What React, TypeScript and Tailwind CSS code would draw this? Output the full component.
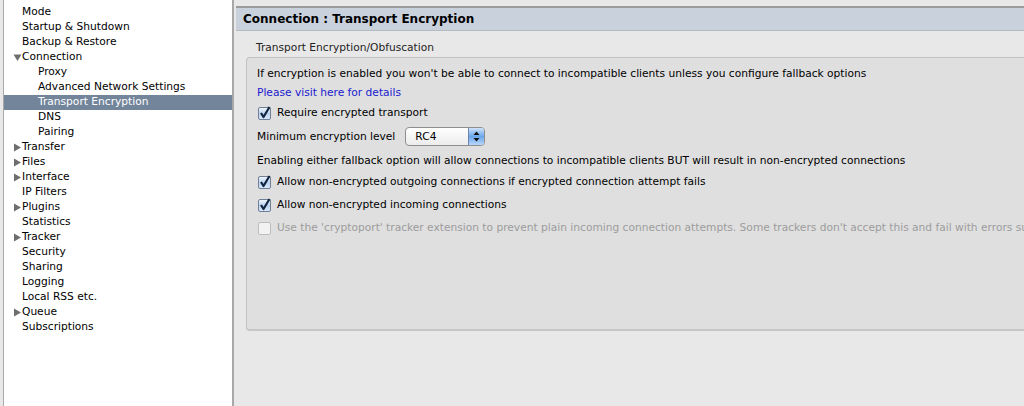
import type { ReactNode } from 'react'

const font = { fontFamily: '"DejaVu Sans", "Liberation Sans", sans-serif' }

type Node = { label: string; level: 0 | 1; arrow?: 'open' | 'closed'; selected?: boolean }

const tree: Node[] = [
  { label: 'Mode', level: 0 },
  { label: 'Startup & Shutdown', level: 0 },
  { label: 'Backup & Restore', level: 0 },
  { label: 'Connection', level: 0, arrow: 'open' },
  { label: 'Proxy', level: 1 },
  { label: 'Advanced Network Settings', level: 1 },
  { label: 'Transport Encryption', level: 1, selected: true },
  { label: 'DNS', level: 1 },
  { label: 'Pairing', level: 1 },
  { label: 'Transfer', level: 0, arrow: 'closed' },
  { label: 'Files', level: 0, arrow: 'closed' },
  { label: 'Interface', level: 0, arrow: 'closed' },
  { label: 'IP Filters', level: 0 },
  { label: 'Plugins', level: 0, arrow: 'closed' },
  { label: 'Statistics', level: 0 },
  { label: 'Tracker', level: 0, arrow: 'closed' },
  { label: 'Security', level: 0 },
  { label: 'Sharing', level: 0 },
  { label: 'Logging', level: 0 },
  { label: 'Local RSS etc.', level: 0 },
  { label: 'Queue', level: 0, arrow: 'closed' },
  { label: 'Subscriptions', level: 0 },
]

const Arrow = ({ open }: { open: boolean }) => (
  <svg width="9" height="9" viewBox="0 0 9 9" className="shrink-0">
    {open ? <path d="M0.5 1.5 L8.5 1.5 L4.5 8 Z" fill="#6e6e6e" /> : <path d="M1 0.5 L8 4.5 L1 8.5 Z" fill="#6e6e6e" />}
  </svg>
)

const TreeRow = ({ node }: { node: Node }) => (
  <div
    className={`h-[15px] flex items-center text-[10.65px] leading-none ${
      node.selected ? 'bg-[#72859b] text-white' : 'text-black'
    } ${node.level === 1 ? 'pl-[34px]' : node.arrow ? 'pl-[9px]' : 'pl-[18px]'}`}
  >
    {node.arrow && <Arrow open={node.arrow === 'open'} />}
    <span>{node.label}</span>
  </div>
)

const Check = ({ disabled }: { disabled?: boolean }) => (
  <svg width="14" height="14" viewBox="0 0 14 14" className="shrink-0">
    <defs>
      <linearGradient id="cb" x1="0" y1="0" x2="0" y2="1">
        <stop offset="0" stopColor="#f4f8fd" />
        <stop offset="0.5" stopColor="#bcd3ef" />
        <stop offset="1" stopColor="#d9e8fa" />
      </linearGradient>
    </defs>
    {disabled ? (
      <rect x="0.5" y="1.5" width="12" height="12" rx="1.5" fill="#f2f2f2" stroke="#bdbdbd" />
    ) : (
      <>
        <rect x="0.5" y="1.5" width="12" height="12" rx="1.5" fill="url(#cb)" stroke="#6f7f96" />
        <path d="M3 7 L5.5 11 L11.5 1" fill="none" stroke="#10243f" strokeWidth="2.2" strokeLinejoin="round" />
      </>
    )}
  </svg>
)

const CheckRow = ({ children, disabled }: { children: ReactNode; disabled?: boolean }) => (
  <div className={`flex items-center gap-[5px] pl-[1px] whitespace-nowrap ${disabled ? 'text-[#9c9c9c]' : 'text-black'}`}>
    <Check disabled={disabled} />
    <span>{children}</span>
  </div>
)

const Select = () => (
  <div className="flex h-[19px] w-[80px] rounded-[4px] border border-[#8e8e8e] overflow-hidden bg-gradient-to-b from-white to-[#ececec]">
    <div className="flex-1 pl-[9px] flex items-center text-[10.65px]">RC4</div>
    <div className="w-[16px] flex items-center justify-center bg-gradient-to-b from-[#cfe2fa] via-[#6aa6ea] to-[#b8d7fb] border-l border-[#6c86ab]">
      <svg width="7" height="11" viewBox="0 0 7 11">
        <path d="M3.5 0.5 L6.5 4 L0.5 4 Z" fill="#111" />
        <path d="M3.5 10.5 L6.5 7 L0.5 7 Z" fill="#111" />
      </svg>
    </div>
  </div>
)

export default function App() {
  return (
    <div className="w-[1024px] h-[406px] bg-[#e8e8e8] flex overflow-hidden" style={font}>
      <div className="ml-[3px] w-[231px] h-full bg-white border-l border-[#a9a9a9] border-r-2 border-r-[#a8a8a8] pt-[5px]">
        {tree.map((n) => (
          <TreeRow key={n.label} node={n} />
        ))}
      </div>
      <div className="flex-1 pl-[2px] pt-[6px] flex flex-col min-w-0">
        <div className="h-[25px] bg-[#c9d1dc] border-t-2 border-[#9b9b9b] border-b border-b-[#b4bac2] flex items-center pl-[7px]">
          <span className="text-[12px] font-bold text-black">Connection : Transport Encryption</span>
        </div>
        <div className="pl-[10px] pt-[10px]">
          <div className="pl-[10px] text-[10.65px] text-[#222] h-[14px] leading-[14px]">Transport Encryption/Obfuscation</div>
          <div className="mt-[2px] h-[274px] bg-[#dfdfdf] border border-[#c2c2c2] border-b-2 border-b-[#c6c6c6] border-r-0 rounded-l-[4px] pl-[10px] pt-[9px] text-[10.65px] leading-[14px] whitespace-nowrap">
            <div>If encryption is enabled you won't be able to connect to incompatible clients unless you configure fallback options</div>
            <div className="mt-[5px] text-[#1a1ad0]">Please visit here for details</div>
            <div className="mt-[6px]">
              <CheckRow>Require encrypted transport</CheckRow>
            </div>
            <div className="mt-[7px] flex items-center gap-[10px]">
              <span>Minimum encryption level</span>
              <Select />
            </div>
            <div className="mt-[8px]">Enabling either fallback option will allow connections to incompatible clients BUT will result in non-encrypted connections</div>
            <div className="mt-[7px]">
              <CheckRow>Allow non-encrypted outgoing connections if encrypted connection attempt fails</CheckRow>
            </div>
            <div className="mt-[9px]">
              <CheckRow>Allow non-encrypted incoming connections</CheckRow>
            </div>
            <div className="mt-[9px]">
              <CheckRow disabled>
                Use the 'cryptoport' tracker extension to prevent plain incoming connection attempts. Some trackers don't accept this and fail with errors such as 'unknown port'
              </CheckRow>
            </div>
          </div>
        </div>
      </div>
    </div>
  )
}
